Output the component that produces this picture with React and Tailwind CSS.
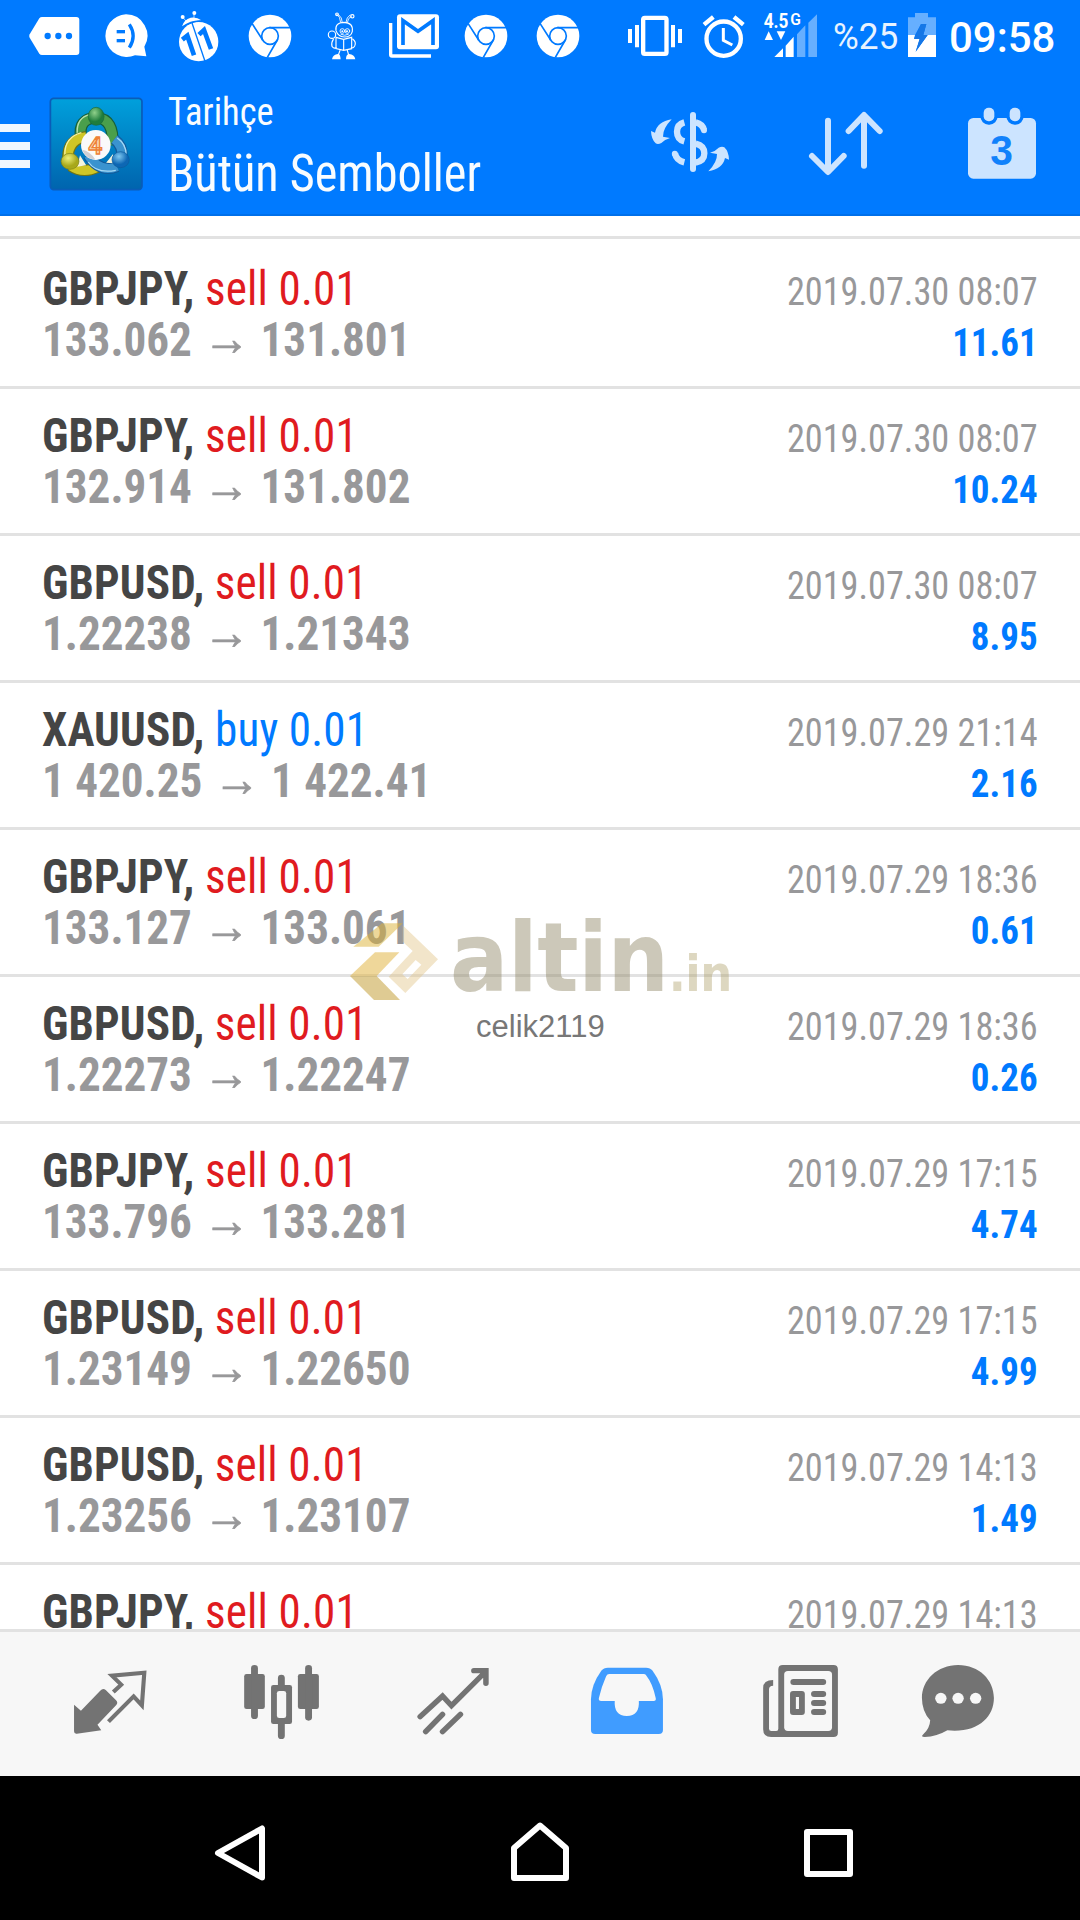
import React from "react";

const BLUE = "#007aff";

const trades = [
  ["GBPJPY", "sell", "0.01", "133.062", "131.801", "2019.07.30 08:07", "11.61"],
  ["GBPJPY", "sell", "0.01", "132.914", "131.802", "2019.07.30 08:07", "10.24"],
  ["GBPUSD", "sell", "0.01", "1.22238", "1.21343", "2019.07.30 08:07", "8.95"],
  ["XAUUSD", "buy", "0.01", "1 420.25", "1 422.41", "2019.07.29 21:14", "2.16"],
  ["GBPJPY", "sell", "0.01", "133.127", "133.061", "2019.07.29 18:36", "0.61"],
  ["GBPUSD", "sell", "0.01", "1.22273", "1.22247", "2019.07.29 18:36", "0.26"],
  ["GBPJPY", "sell", "0.01", "133.796", "133.281", "2019.07.29 17:15", "4.74"],
  ["GBPUSD", "sell", "0.01", "1.23149", "1.22650", "2019.07.29 17:15", "4.99"],
  ["GBPUSD", "sell", "0.01", "1.23256", "1.23107", "2019.07.29 14:13", "1.49"],
  ["GBPJPY", "sell", "0.01", null, null, "2019.07.29 14:13", null],
];

// Status icons are drawn at three units per pixel in a 72px tall strip.
function StatusIcon({ x, w, className, children }) {
  return (
    <svg className={"h-[72px] shrink-0 " + className} viewBox={`${x} 0 ${w} 216`} fill="#fff">
      {children}
    </svg>
  );
}

function ChromeMark({ cx }) {
  return (
    <g transform={`translate(${cx} 108)`}>
      <circle r="64" />
      <g stroke={BLUE} strokeWidth="5" fill="none">
        <circle r="25" />
        <path d="M-2 -25H61M-22 12L-54 -38M22 12L-8 64" />
      </g>
    </g>
  );
}

function StatusBar() {
  return (
    <div className="flex h-[72px] items-center">
      <StatusIcon x={0} w={276} className="w-[92px]">
        <path d="M126 51H229Q238 51 238 60V156Q238 165 229 165H126Q121 165 118 161L89 113Q86 108 89 103L118 55Q121 51 126 51Z" />
        <g fill={BLUE}><circle cx="143" cy="108" r="9.5" /><circle cx="175" cy="108" r="9.5" /><circle cx="207" cy="108" r="9.5" /></g>
      </StatusIcon>
      <StatusIcon x={276} w={213} className="w-[71px]">
        <path d="M378 43A64 64 0 1 0 405 166L439 169L433 140A64 64 0 0 0 378 43Z" />
        <g fill={BLUE}><rect x="350" y="90" width="25" height="10" /><rect x="350" y="117" width="25" height="10" /></g>
        <path d="M388 73Q411 108 388 143" fill="none" stroke={BLUE} strokeWidth="10" />
      </StatusIcon>
      <StatusIcon x={489} w={213} className="w-[71px]">
        <circle cx="596" cy="125" r="59" />
        <path d="M546 79Q552 58 572 53Q590 50 604 61Q574 59 546 79Z" />
        <circle cx="548" cy="51" r="6" /><circle cx="583" cy="39" r="6" />
        <path d="M550 54L560 65M582 42L582 55" stroke="#fff" strokeWidth="2" />
        <path d="M545 84Q573 62 609 63" stroke={BLUE} strokeWidth="3" fill="none" />
        <path d="M575 66L615 184" stroke={BLUE} strokeWidth="4" />
        <g stroke={BLUE} strokeWidth="14" fill="none">
          <path d="M547 119L562 107L582 166" />
          <path d="M597 104L612 90L633 147" />
        </g>
      </StatusIcon>
      <StatusIcon x={702} w={216} className="w-[72px]"><ChromeMark cx={810} /></StatusIcon>
      <StatusIcon x={918} w={192} className="w-[64px]">
        <g fill="none" stroke="#fff" strokeWidth="3.4" strokeLinecap="round">
          <path d="M1022 67Q1021 50 1010 42M1027 68Q1027 52 1016 44M1042 67Q1043 54 1054 49M1038 66Q1039 52 1050 45" strokeWidth="2.6" />
          <circle cx="1011" cy="43" r="4" /><circle cx="1057" cy="49" r="5" />
          <path d="M1008 92Q1004 68 1032 67Q1060 68 1057 94Q1053 111 1033 111Q1014 110 1008 92Z" />
          <circle cx="1027" cy="93" r="7" strokeWidth="2.6" /><circle cx="1042" cy="93" r="7" strokeWidth="2.6" />
          <path d="M1023 103Q1034 109 1045 103" strokeWidth="2.6" />
          <circle cx="996" cy="104" r="11" />
          <path d="M1008 112L1031 118L1055 112V146L1031 151L1008 146ZM1031 118V151" />
          <path d="M1000 118Q993 128 996 139Q1002 147 1008 143M1058 117Q1070 126 1064 138Q1059 146 1054 142" />
          <path d="M1020 151L1015 165M1042 151L1046 165" />
        </g>
        <path d="M996 178Q999 163 1014 162Q1021 162 1022 178ZM1038 178Q1038 163 1047 162Q1063 163 1066 178Z" />
        <circle cx="1027" cy="94" r="3" /><circle cx="1041" cy="94" r="3" />
      </StatusIcon>
      <StatusIcon x={1110} w={246} className="w-[82px]">
        <path d="M1167 69H1177V163H1293V173H1176Q1167 173 1167 164Z" />
        <rect x="1191" y="43" width="126" height="105" rx="9" />
        <path d="M1209 135V62L1254 94L1299 62V135" fill="none" stroke={BLUE} strokeWidth="11" />
      </StatusIcon>
      <StatusIcon x={1356} w={210} className="w-[70px]"><ChromeMark cx={1458} /></StatusIcon>
      <StatusIcon x={1566} w={264} className="w-[88px]"><ChromeMark cx={1674} /></StatusIcon>
      <StatusIcon x={1830} w={246} className="w-[82px]">
        <rect x="1929.5" y="53.5" width="70" height="108" rx="5" fill="none" stroke="#fff" strokeWidth="13" />
        <path d="M1884 87H1896V129H1884ZM1905 75H1917V142H1905ZM2013 75H2025V142H2013ZM2034 87H2046V129H2034Z" />
      </StatusIcon>
      <StatusIcon x={2076} w={186} className="w-[62px]">
        <g fill="none" stroke="#fff">
          <circle cx="2171" cy="116" r="51.5" strokeWidth="13" />
          <path d="M2112 74L2140 51M2230 74L2202 51" strokeWidth="13" />
          <path d="M2170 84V121L2197 135" strokeWidth="9" />
        </g>
      </StatusIcon>
      <StatusIcon x={2262} w={216} className="w-[72px]">
        <text x="2291" y="84" fontFamily="Roboto" fontWeight="700" fontSize="63" textLength="74" lengthAdjust="spacingAndGlyphs">4.5</text>
        <text x="2371" y="74" fontFamily="Roboto" fontWeight="600" fontSize="47" textLength="32" lengthAdjust="spacingAndGlyphs">G</text>
        <path d="M2294 120L2306 94L2319 120ZM2330 94H2356L2343 120Z" />
        <path d="M2323 171L2349 145V171ZM2357 171V137L2381 110V171Z" />
        <path d="M2391 171V103L2416 76V171ZM2425 171V68L2451 43V171Z" opacity=".4" />
      </StatusIcon>
      <div className="w-[76px] pl-[7px] pt-[2px]">
        <span className="inline-block origin-left scale-x-[0.95] text-[37px] leading-[72px] text-[#e8f3ff]">%25</span>
      </div>
      <StatusIcon x={2706} w={120} className="w-[40px]">
        <path d="M2724 52H2745V39H2784V52H2808V105H2770L2779 72H2763L2745 105H2724Z" opacity=".4" />
        <path d="M2724 105H2745L2742 116H2759L2747 155L2783 105H2808V171H2724Z" />
        <path d="M2770 105L2783 105L2747 155L2759 117H2742L2763 72H2779Z" fill="#1677e6" />
      </StatusIcon>
      <div className="flex-1 pl-[7px] pt-[2px]">
        <span className="inline-block origin-left scale-x-[0.975] text-[43px] font-medium leading-[72px] text-white">09:58</span>
      </div>
    </div>
  );
}

function AppLogo() {
  return (
    <svg className="ml-[19px] h-[144px] w-[94px] shrink-0" viewBox="142 -24 273 432" preserveAspectRatio="none">
      <defs>
        <linearGradient id="tile" x1="0" y1="0" x2="0" y2="1"><stop offset="0" stopColor="#00a0dc" /><stop offset="1" stopColor="#0064ae" /></linearGradient>
        <radialGradient id="green" cx=".4" cy=".3"><stop offset="0" stopColor="#8fd08a" /><stop offset="1" stopColor="#1f7d3c" /></radialGradient>
        <radialGradient id="yellow" cx=".4" cy=".3"><stop offset="0" stopColor="#eef07a" /><stop offset="1" stopColor="#a8a81a" /></radialGradient>
        <radialGradient id="sky" cx=".4" cy=".3"><stop offset="0" stopColor="#7fc8f0" /><stop offset="1" stopColor="#0d67b4" /></radialGradient>
      </defs>
      <rect x="146" y="55" width="266" height="274" rx="10" fill="url(#tile)" stroke="#0a5cb8" strokeWidth="5" />
      <g fill="none">
        <path d="M235 172Q226 116 279 113Q332 116 326 196" stroke="#175f3a" strokeWidth="35" />
        <path d="M235 172Q226 116 279 113Q332 116 326 196" stroke="#4a9f4b" strokeWidth="28" />
        <path d="M224 158Q222 112 262 103" stroke="#b8dfae" strokeWidth="4" />
        <path d="M250 170Q198 178 197 232M206 258Q240 282 282 262" stroke="#6f7415" strokeWidth="34" />
        <path d="M250 170Q198 178 197 232M206 258Q240 282 282 262" stroke="#cfc626" strokeWidth="27" />
        <path d="M188 224Q187 172 236 158" stroke="#f5f2a6" strokeWidth="4" />
        <path d="M332 178Q356 196 354 232M340 260Q290 280 256 226" stroke="#125999" strokeWidth="33" />
        <path d="M332 178Q356 196 354 232M340 260Q290 280 256 226" stroke="#3a93cf" strokeWidth="26" />
        <path d="M256 246Q280 282 336 271M340 174Q366 192 366 224" stroke="#a6d9f5" strokeWidth="4" />
      </g>
      <path d="M232 226L250 256L224 260ZM328 222L308 248L330 250Z" fill="#f5f4dc" />
      <ellipse cx="279" cy="109" rx="23" ry="27" fill="url(#green)" stroke="#1b6a3a" strokeWidth="2" />
      <ellipse cx="203" cy="244" rx="26" ry="24" fill="url(#yellow)" stroke="#7f8417" strokeWidth="2" />
      <ellipse cx="350" cy="239" rx="25" ry="24" fill="url(#sky)" stroke="#0d5a9c" strokeWidth="2" />
      <ellipse cx="278" cy="195" rx="43" ry="45" fill="#fafafa" />
      <path d="M238 209Q260 212 276 238Q250 237 238 209Z" fill="#cfcfd2" />
      <text x="256" y="221" fontFamily="Roboto" fontSize="74" fontWeight="600" fill="#fbd9b0" stroke="#ee8136" strokeWidth="4" textLength="41" lengthAdjust="spacingAndGlyphs">4</text>
    </svg>
  );
}

function AppBar() {
  const arrow = "M215 118Q172 125 165 158L153 153Q154 178 167 190Q174 194 184 189Q194 178 210 174L189 170Q188 146 215 118Z";
  return (
    <div className="flex h-[144px] border-b-2 border-[#0070ea]">
      <div className="flex w-[30px] shrink-0 flex-col gap-[10px] pt-[52px]">
        <div className="h-2 bg-[#f0f7ff]" /><div className="h-2 bg-[#f0f7ff]" /><div className="h-2 bg-[#f0f7ff]" />
      </div>
      <AppLogo />
      <div className="flex flex-col whitespace-nowrap pl-[25px] pt-[15px] font-stretch-condensed text-[#f8fcff] [font-weight:440]">
        <span className="origin-left scale-x-[0.937] text-[39px] leading-[50px]">Tarihçe</span>
        <span className="origin-left scale-x-[0.946] text-[51px] leading-[73px]">Bütün Semboller</span>
      </div>
      <div className="ml-auto flex w-[440px] shrink-0">
        <svg className="h-[144px] w-[130px]" viewBox="120 -24 390 432" fill="#cce4ff">
          <rect x="270" y="96" width="18" height="180" rx="9" />
          <path d={arrow} />
          <path d={arrow} transform="rotate(180 270 196)" />
          <g fill="none" stroke="#cce4ff" strokeWidth="19">
            <path d="M253 127Q231 133 231 155Q231 178 253 184" />
            <path d="M287 127Q308 132 312 150" />
            <path d="M287 191Q313 197 313 220Q313 243 287 248" />
            <path d="M225 220Q229 241 253 247" />
          </g>
          <circle cx="312" cy="151" r="9" /><circle cx="224.500" cy="221" r="9" />
        </svg>
        <svg className="h-[144px] w-[155px]" viewBox="510 -24 465 432" fill="none" stroke="#cce4ff" strokeWidth="18" strokeLinecap="round" strokeLinejoin="round">
          <path d="M684 122V274M636 228L684 276L731 228M792 257V106M746 153L792 105L839 153" />
        </svg>
        <svg className="h-[144px] w-[155px]" viewBox="975 -24 465 432" fill="#cce4ff">
          <rect x="1104" y="114" width="204" height="182" rx="16" />
          <g stroke={BLUE} strokeWidth="20"><rect x="1151" y="83" width="32" height="41" rx="15" /><rect x="1229" y="83" width="32" height="41" rx="15" /></g>
          <rect x="1151" y="83" width="32" height="41" rx="15" /><rect x="1229" y="83" width="32" height="41" rx="15" />
          <text x="1171" y="256" fontFamily="Liberation Sans" fontWeight="700" fontSize="128" fill="#1181fb" textLength="68" lengthAdjust="spacingAndGlyphs">3</text>
        </svg>
      </div>
    </div>
  );
}

function TradeRow({ trade }) {
  const [symbol, side, lots, open, close, time, profit] = trade;
  return (
    <div className="flex h-[147px] shrink-0 justify-between whitespace-nowrap border-b-[3px] border-[#e2e2e2] px-[42px] font-stretch-condensed">
      <div className="flex origin-left scale-x-[0.94] flex-col pt-[21px] text-[48px] leading-[51px]">
        <div className="h-[51px] tracking-[0.15px]">
          <span className="font-bold text-[#454545]">{symbol},</span>{" "}
          <span className={"[font-weight:430] " + (side === "buy" ? "text-[#007aff]" : "text-[#e01b1f]")}>{side} {lots}</span>
        </div>
        {open && (
          <div className="flex h-[51px] font-bold text-[#98989a]">
            <span>{open}</span>
            <span className='w-[73px] pl-px text-center font-["Liberation_Sans"] text-[50px] font-bold leading-[49px] [-webkit-text-stroke:0.7px_#98989a]'>→</span>
            <span>{close}</span>
          </div>
        )}
      </div>
      <div className="flex flex-col pt-[25px] text-right text-[39px] leading-[51px]">
        <span className="origin-right scale-x-[0.93] text-[#98989a] [font-weight:420]">{time}</span>
        {profit && <span className="origin-right scale-x-[0.948] font-bold text-[#007aff]">{profit}</span>}
      </div>
    </div>
  );
}

function Watermark() {
  return (
    <div className="pointer-events-none absolute left-[350px] top-[690px] flex w-[390px] flex-col">
      <div className="flex h-[94px] items-start">
        <svg className="mt-[16px] h-[80px] w-[90px] shrink-0" viewBox="90 126 270 240">
          <path d="M100 200L186 130H248L176 200Z" fill="#dcb235" opacity=".5" />
          <path d="M165 217H238L170 288H90Z" fill="#dfaf35" opacity=".5" />
          <path d="M90 288H170L240 360H162Z" fill="#c09827" opacity=".5" />
          <path d="M248 136L354 238L256 339L206 290L278 213L248 185ZM247 283L263 297L304 254L287 240Z" fill="#dfc080" opacity=".42" fillRule="evenodd" />
        </svg>
        <div className='flex items-baseline whitespace-nowrap pt-[5px] font-["DejaVu_Sans_Condensed","DejaVu_Sans"] font-bold font-stretch-semi-condensed leading-[94px]'>
          <span className="pl-[10px] text-[96px] tracking-[-0.3px] text-[#8f8464]/45">altin</span>
          <span className="text-[50px] tracking-[-0.5px] text-[#a99b62]/40">.in</span>
        </div>
      </div>
      <span className='pl-[126px] font-["Liberation_Sans"] text-[31px] leading-[54px] text-[#777]'>celik2119</span>
    </div>
  );
}

function History() {
  return (
    <div className="relative flex h-[1413px] flex-col overflow-hidden bg-white">
      <div className="mb-[3px] h-[23px] shrink-0 border-b-[3px] border-[#e2e2e2]" />
      {trades.map((t, i) => <TradeRow key={i} trade={t} />)}
      <Watermark />
    </div>
  );
}

function Tab({ x, children }) {
  return (
    <svg className="h-[144px] w-[180px]" viewBox={`${x} 276 522.67 432`} preserveAspectRatio="none" fill="#737373">
      {children}
    </svg>
  );
}

function TabBar() {
  const paper = "#f7f7f7";
  return (
    <div className="grid h-[147px] grid-cols-6 border-t-[3px] border-[#e2e2e2] bg-[#f7f7f7]">
      <Tab x={0}>
        <path d="M215 494L235 512L291 452Q299 443 307 450L337 481Q344 489 337 496L283 554L294 571L223 581Q215 582 215 574Z" />
        <path d="M329 456L352 434L325 407L419 398L412 496L388 469L315 545" fill="none" stroke="#737373" strokeWidth="12" />
      </Tab>
      <Tab x={522.67}>
        <rect x="709" y="402" width="60" height="105" rx="7" /><rect x="729" y="375" width="20" height="162" rx="10" />
        <rect x="865" y="402" width="61" height="105" rx="7" /><rect x="886" y="375" width="20" height="167" rx="10" />
        <rect x="787" y="435" width="61" height="117" rx="7" /><rect x="807" y="404" width="20" height="193" rx="10" />
        <rect x="804" y="453" width="27" height="81" rx="7" fill={paper} />
      </Tab>
      <Tab x={1045.33}>
        <path d="M1220 530L1285 468L1311 497L1409 396M1376 392H1411V430M1236 575L1285 523M1285 575L1337 523" fill="none" stroke="#737373" strokeWidth="16" strokeLinecap="round" />
      </Tab>
      <Tab x={0}>
        <path d="M197 383H308Q320 383 327 392Q357 435 357 478V570Q357 582 345 582H160Q148 582 148 570V478Q148 435 178 392Q185 383 197 383Z" fill="#409cff" />
        <path d="M201 402H302Q307 402 309 407Q327 430 336 474Q338 483 330 483H287Q290 527 252 528Q214 527 217 483H178Q169 483 171 474Q178 442 192 409Q195 402 201 402Z" fill={paper} />
      </Tab>
      <Tab x={522.67}>
        <path d="M677 420V437Q665 437 665 448V566Q665 573 672 573H686Q692 573 692 566V388Q692 375 705 375H852Q865 375 865 388V578Q865 591 852 591H671Q648 591 648 568V444Q648 420 677 420Z" />
        <rect x="709" y="393" width="139" height="180" rx="11" fill={paper} />
        <rect x="727" y="417" width="104" height="18" rx="9" />
        <rect x="726" y="453" width="43" height="72" rx="9" />
        <rect x="743" y="471" width="9" height="36" fill={paper} />
        <rect x="787" y="453" width="44" height="18" rx="9" /><rect x="787" y="480" width="44" height="18" rx="9" /><rect x="787" y="507" width="44" height="18" rx="9" />
      </Tab>
      <Tab x={1045.33}>
        <path d="M1214 375C1275 375 1318 420 1318 474C1318 533 1270 580 1183 571Q1152 590 1117 591Q1104 591 1113 583Q1132 565 1133 541Q1109 514 1109 474C1109 420 1154 375 1214 375Z" />
        <g fill={paper}><circle cx="1164" cy="475" r="16.500" /><circle cx="1214" cy="475" r="16.500" /><circle cx="1265" cy="475" r="16.500" /></g>
      </Tab>
    </div>
  );
}

function SystemNav() {
  const box = "h-[144px] w-[360px]";
  const line = { fill: "none", stroke: "#fff", strokeWidth: 6, strokeLinejoin: "round" };
  return (
    <div className="grid h-[144px] grid-cols-3 bg-black">
      <svg className={box} viewBox="0 0 360 144" {...line}><path d="M218 77L262 52.500V101.500Z" /></svg>
      <svg className={box} viewBox="0 0 360 144" {...line}><path d="M154 102V72L180 49.500L206 72V102Z" /></svg>
      <svg className={box} viewBox="0 0 360 144" {...line}><rect x="87" y="56" width="43" height="42" /></svg>
    </div>
  );
}

export default function App() {
  return (
    <div className='flex h-[1920px] w-[1080px] flex-col overflow-hidden bg-white font-["Roboto",sans-serif]'>
      <header className="h-[216px] shrink-0 bg-[#007aff]">
        <StatusBar />
        <AppBar />
      </header>
      <History />
      <TabBar />
      <SystemNav />
    </div>
  );
}
